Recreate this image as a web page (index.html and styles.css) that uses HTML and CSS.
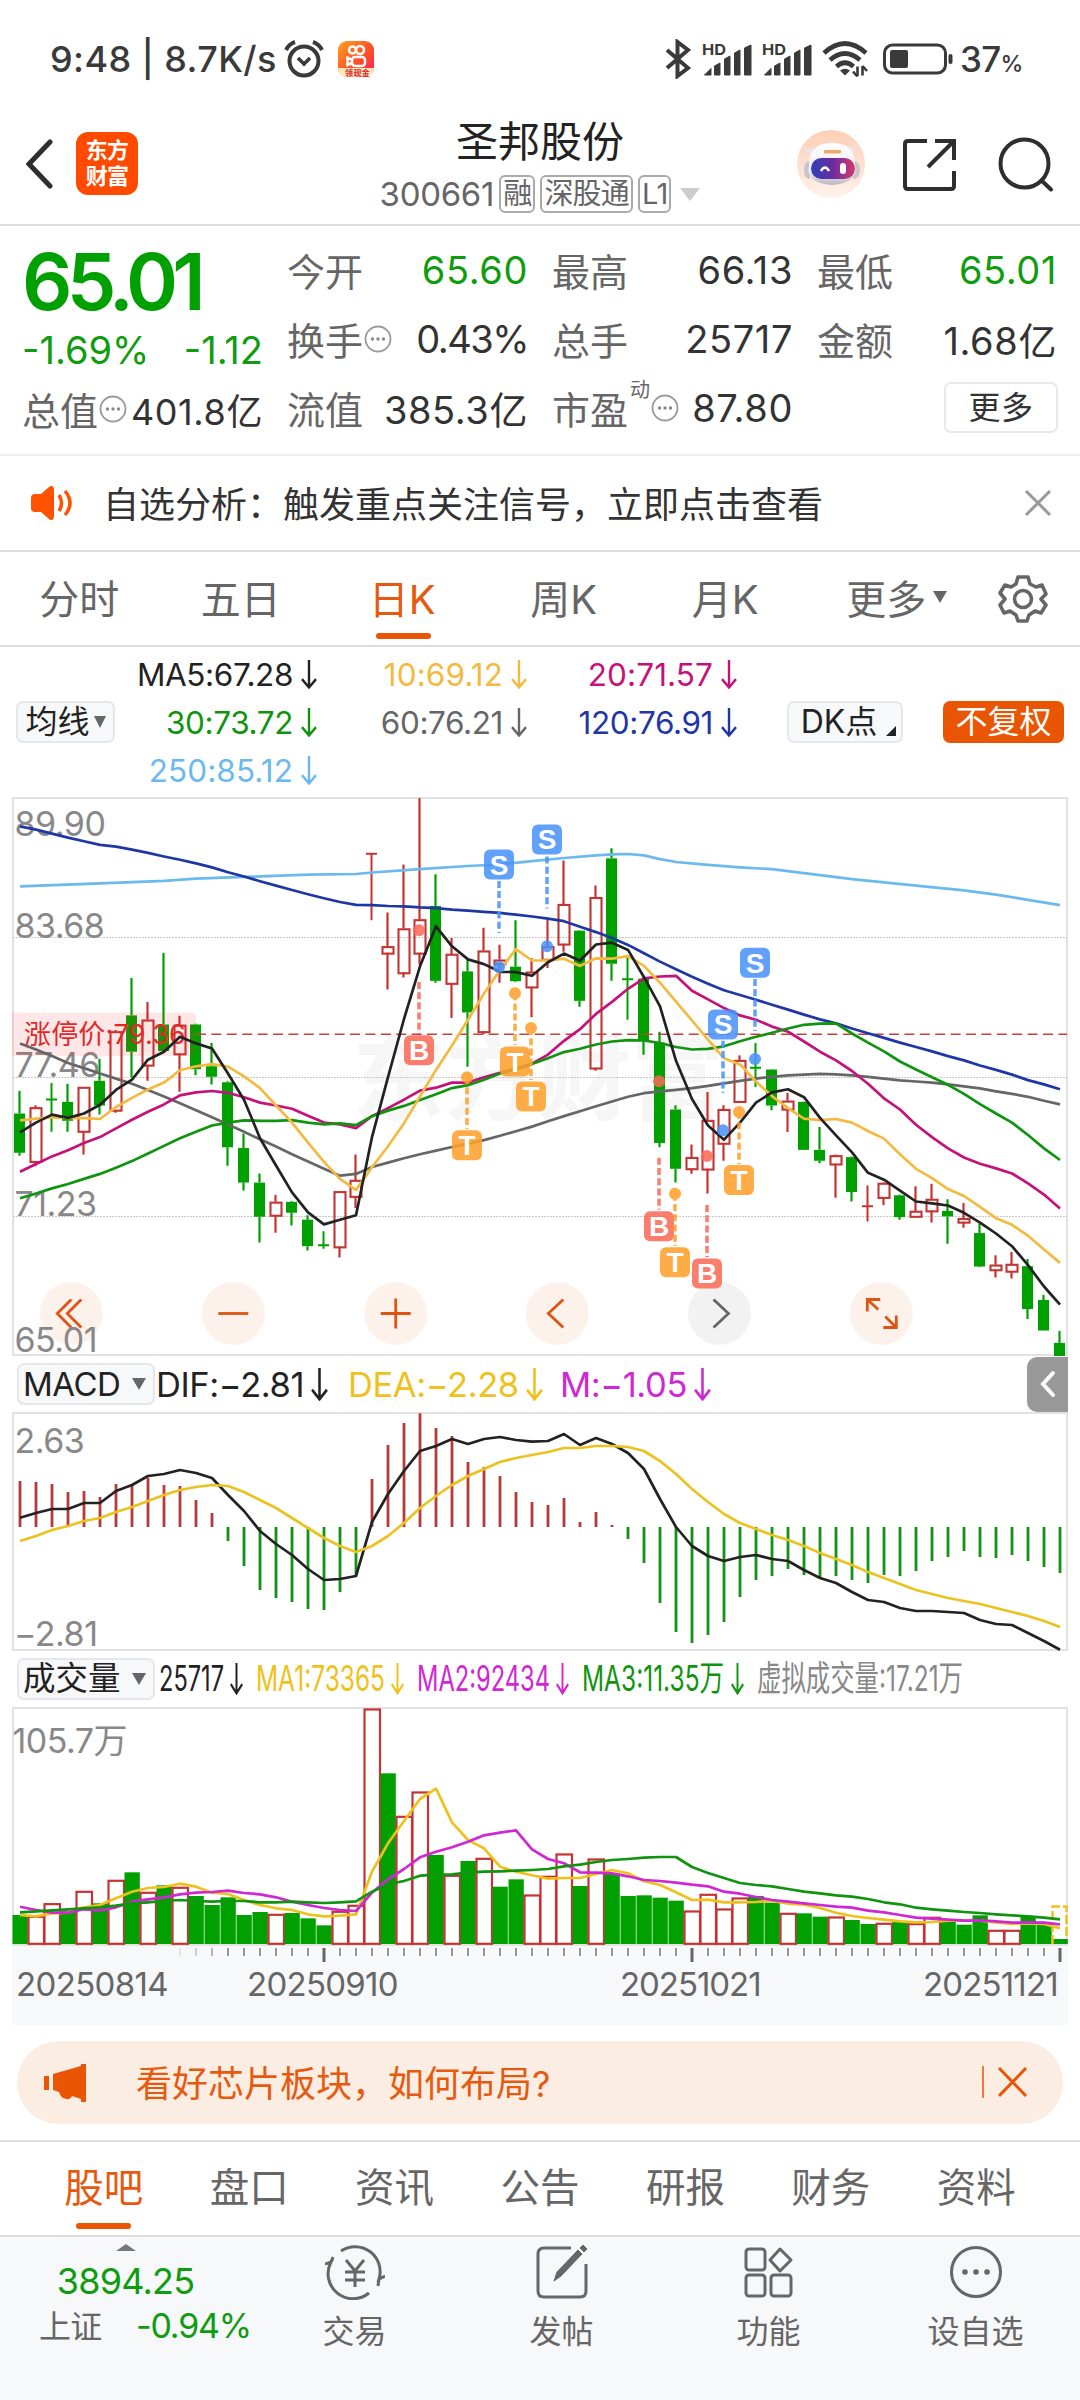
FILE: index.html
```html
<!DOCTYPE html>
<html lang="zh-CN">
  <head>
    <meta charset="UTF-8" />
    <meta name="viewport" content="width=device-width, initial-scale=1.0" />
    <title>圣邦股份 300661</title>
    <link rel="stylesheet" href="styles.css">
  </head>
  <body>
    <svg class="defs" width="0" height="0">
      <symbol id="down" viewBox="0 0 16 28" preserveAspectRatio="none"><path d="M8 0V26M1 18.500L8 26.500L15 18.500" fill="none" stroke="currentColor" stroke-width="2.400" /></symbol>
      <symbol id="bars" viewBox="0 0 50 36">
        <path d="M2.500 34L9 27.500V34ZM12.500 34V25L18 22V34ZM22.500 34V18L28 15V34ZM32.500 34V12L38 9V34ZM42.500 34V7L49 4V34Z" fill="#3a3a3a" stroke="#3a3a3a" stroke-linejoin="round" />
      </symbol>
      <symbol id="dots" viewBox="0 0 28 28">
        <circle cx="14" cy="14" r="12.500" fill="none" stroke="#999" stroke-width="1.800" />
        <circle cx="8.500" cy="14" r="1.700" fill="#888" /><circle cx="14" cy="14" r="1.700" fill="#888" /><circle cx="19.500" cy="14" r="1.700" fill="#888" />
      </symbol>
    </svg>

    <div class="status">
      <span class="clock">9:48 | 8.7K/s</span>
      <svg class="alarm" width="40" height="38" viewBox="0 0 40 38" fill="none" stroke="#3a3a3a" stroke-width="4">
        <circle cx="20" cy="21" r="14.500" /><path d="M2 10Q5 4 11 2M38 10Q35 4 29 2" /><path d="M14 18L20 24L26 18" stroke-width="3.500" />
      </svg>
      <svg class="promo" width="36" height="36" viewBox="0 0 36 36">
        <defs><linearGradient id="pg" x1="0" y1="0" x2="1" y2="1"><stop offset="0" stop-color="#ffa01e" /><stop offset=".6" stop-color="#ff4a28" /><stop offset="1" stop-color="#ff2060" /></linearGradient></defs>
        <rect width="36" height="36" rx="9" fill="url(#pg)" />
        <g fill="none" stroke="#fff" stroke-width="2.500"><circle cx="14.500" cy="9" r="3.500" /><circle cx="22" cy="9" r="4" /><rect x="14" y="16" width="13" height="9" rx="3" /><path d="M14 19L9.500 16.500V24L14 22" /></g>
        <path d="M0 27H36Q36 36 27 36H9Q0 36 0 27Z" fill="#ffe6c0" />
        <text x="7" y="34.500" font-size="8" font-weight="700" fill="#e02020" textLength="24">领现金</text>
      </svg>
      <svg class="bt" width="26" height="40" viewBox="0 0 26 40" fill="none" stroke="#3a3a3a" stroke-width="4"><path d="M2 11L23 29L12.500 37V3L23 11L2 29" /></svg>
      <svg class="sig" width="50" height="36"><use href="#bars" /><text x="0" y="14" textLength="24" lengthAdjust="spacingAndGlyphs">HD</text></svg>
      <svg class="sig" width="50" height="36"><use href="#bars" /><text x="0" y="14" textLength="24" lengthAdjust="spacingAndGlyphs">HD</text></svg>
      <svg class="wifi" width="46" height="36" viewBox="0 0 46 36" fill="none" stroke="#3a3a3a" stroke-width="4.600">
        <path d="M2 12Q23 -7 44 12M8 19Q23 6 38 19M14.500 25.500Q23 18 31.500 25.500" /><path d="M18 29.500Q23 26 28 29.500L23 34.500Z" fill="#3a3a3a" stroke="none" />
        <path d="M35.500 35V25.500M40.500 34.500V25" stroke-width="2.600" /><path d="M31 30.500L35.500 35.500M45 30L40.500 25" stroke-width="2.600" />
      </svg>
      <svg class="battery" width="70" height="32" viewBox="0 0 70 32"><rect x="1.500" y="2" width="61" height="28" rx="8" fill="none" stroke="#3a3a3a" stroke-width="3" /><rect x="7" y="7" width="18" height="18" rx="2" fill="#3a3a3a" /><rect x="65.500" y="11" width="4" height="10" rx="2" fill="#3a3a3a" /></svg>
      <span class="percent">37<small>%</small></span>
    </div>

    <header class="header">
      <div class="header-left">
        <svg width="28" height="52" viewBox="0 0 28 52" fill="none" stroke="#2e2e2e" stroke-width="5" stroke-linecap="round"><path d="M24 4L3 26L24 48" /></svg>
        <div class="logo">东方<br>财富</div>
      </div>
      <div class="title">
        <h1>圣邦股份</h1>
        <div class="code"><span class="number">300661</span><i>融</i><i>深股通</i><i>L1</i><b class="caret"></b></div>
      </div>
      <div class="header-right">
        <svg width="70" height="70" viewBox="0 0 70 70">
          <defs>
            <linearGradient id="halo" x1="0" y1="0" x2="0" y2="1"><stop offset="0" stop-color="#ffceb5" /><stop offset="1" stop-color="#fff2eb" /></linearGradient>
            <linearGradient id="visor" x1="0" y1="0" x2="1" y2="0"><stop offset="0" stop-color="#3140b8" /><stop offset=".5" stop-color="#6a2ca0" /><stop offset="1" stop-color="#d83a68" /></linearGradient>
            <linearGradient id="shell" x1="0" y1="0" x2="0" y2="1"><stop offset="0" stop-color="#fff" /><stop offset=".7" stop-color="#eeebee" /><stop offset="1" stop-color="#b9b5bd" /></linearGradient>
          </defs>
          <circle cx="35" cy="35" r="34" fill="url(#halo)" />
          <path d="M8 17Q9 24 16 26L21 19Q12 21 8 17ZM60 15Q61 23 54 26L47 18Q57 20 60 15Z" fill="#e9e4e8" />
          <path d="M8 41Q8 32 14 32V50Q8 50 8 41ZM64 41Q64 32 57 32V50Q64 50 64 41Z" fill="#c9c5cd" />
          <path d="M13 36Q13 14 36 14Q59 14 59 36Q63 54 36 56Q9 54 13 36Z" fill="url(#shell)" />
          <rect x="15" y="29" width="44" height="21" rx="10.500" fill="url(#visor)" />
          <path d="M25 42Q29 35 33 42" fill="none" stroke="#fff" stroke-width="2.500" /><rect x="44" y="34" width="6" height="11" rx="3" fill="#fff" />
          <rect x="28" y="21" width="17" height="3.500" rx="1" fill="#f0a868" />
        </svg>
        <svg width="56" height="56" viewBox="0 0 56 56" fill="none" stroke="#2e2e2e" stroke-width="4"><path d="M25 4H6Q3 4 3 7V49Q3 52 6 52H49Q52 52 52 49V34M33 4H52V23M51 5L26 30" /></svg>
        <svg width="56" height="56" viewBox="0 0 56 56" fill="none" stroke="#2e2e2e" stroke-width="4" stroke-linecap="round"><circle cx="26.500" cy="26.500" r="24" /><path d="M43.500 43.500L53 52.500" /></svg>
      </div>
    </header>

    <section class="quote">
      <div class="quote-main">
        <div class="price">65.01</div>
        <div class="row change"><span>-1.69%</span><span>-1.12</span></div>
        <div class="row"><label>总值<svg class="info"><use href="#dots" /></svg></label><span>401.8亿</span></div>
      </div>
      <div class="quote-col">
        <div class="row"><label>今开</label><span class="down">65.60</span></div>
        <div class="row"><label>换手<svg class="info"><use href="#dots" /></svg></label><span class="tight">0.43%</span></div>
        <div class="row"><label>流值</label><span>385.3亿</span></div>
      </div>
      <div class="quote-col">
        <div class="row"><label>最高</label><span>66.13</span></div>
        <div class="row"><label>总手</label><span>25717</span></div>
        <div class="row"><label>市盈<sup>动</sup><svg class="info"><use href="#dots" /></svg></label><span>87.80</span></div>
      </div>
      <div class="quote-col">
        <div class="row"><label>最低</label><span class="down">65.01</span></div>
        <div class="row"><label>金额</label><span>1.68亿</span></div>
        <div class="row"><button class="more">更多</button></div>
      </div>
    </section>

    <section class="notice">
      <svg width="42" height="34" viewBox="0 0 42 34"><path d="M0 12Q0 8 4 8H10L18 1Q22 -2 23 3V31Q22 36 18 33L10 26H4Q0 26 0 22Z" fill="#ff5200" /><path d="M28 9Q33 17 28 25M34 5Q44 17 34 29" fill="none" stroke="#ff5200" stroke-width="3.500" /></svg>
      <p>自选分析：触发重点关注信号，立即点击查看</p>
      <svg width="28" height="28" viewBox="0 0 28 28" stroke="#999" stroke-width="3"><path d="M2 2L26 26M26 2L2 26" /></svg>
    </section>

    <nav class="periods">
      <a>分时</a><a>五日</a><a class="active">日K</a><a>周K</a><a>月K</a><a>更多<b class="caret"></b></a>
      <svg width="50" height="50" viewBox="0 0 50 50" fill="none" stroke="#666" stroke-width="3.600" stroke-linejoin="round"><path d="M20 3H30L32 10L38 13L44 11L48 20L43 25L48 31L43 39L37 37L31 41L29 47H20L18 41L12 37L6 39L2 31L7 25L2 19L7 11L13 13L18 10Z" /><circle cx="25" cy="25" r="8.500" /></svg>
    </nav>

    <section class="averages">
      <button class="chip">均线<b class="caret"></b></button>
      <div class="ma-grid">
        <span class="c-black">MA5:67.28<svg><use href="#down" /></svg></span>
        <span class="c-yellow">10:69.12<svg><use href="#down" /></svg></span>
        <span class="c-pink">20:71.57<svg><use href="#down" /></svg></span>
        <span class="c-green">30:73.72<svg><use href="#down" /></svg></span>
        <span class="c-gray">60:76.21<svg><use href="#down" /></svg></span>
        <span class="c-blue">120:76.91<svg><use href="#down" /></svg></span>
        <span class="c-sky">250:85.12<svg><use href="#down" /></svg></span>
      </div>
      <button class="chip dk">DK点</button>
      <button class="chip fq">不复权</button>
    </section>

    <main class="charts">
      <svg id="priceChart" width="1056" height="559" viewBox="12 7 1056 559"></svg>

      <div class="legend macd">
        <button class="chip">MACD<b class="caret"></b></button>
        <span class="c-black">DIF:−2.81<svg><use href="#down" /></svg></span>
        <span class="c-gold">DEA:−2.28<svg><use href="#down" /></svg></span>
        <span class="c-violet">M:−1.05<svg><use href="#down" /></svg></span>
        <div class="drawer"><svg width="16" height="28" viewBox="0 0 16 28" fill="none" stroke="#fff" stroke-width="4" stroke-linecap="round"><path d="M13 3L3 14L13 25" /></svg></div>
      </div>
      <svg id="macdChart" width="1056" height="239" viewBox="12 62 1056 239"></svg>

      <div class="legend volume">
        <button class="chip">成交量<b class="caret"></b></button>
        <svg width="820" height="40" viewBox="157 0 820 40" class="volume-values">
          <g class="c-black"><text x="159" y="32" textLength="65" lengthAdjust="spacingAndGlyphs">25717</text><use href="#down" x="230" y="4" width="13" height="32" /></g>
          <g class="c-gold"><text x="256" y="32" textLength="129" lengthAdjust="spacingAndGlyphs">MA1:73365</text><use href="#down" x="391" y="4" width="13" height="32" /></g>
          <g class="c-violet"><text x="417" y="32" textLength="133" lengthAdjust="spacingAndGlyphs">MA2:92434</text><use href="#down" x="556" y="4" width="13" height="32" /></g>
          <g class="c-green"><text x="582" y="32" textLength="142" lengthAdjust="spacingAndGlyphs">MA3:11.35万</text><use href="#down" x="731" y="4" width="13" height="32" /></g>
          <g class="c-light"><text x="757" y="32" textLength="206" lengthAdjust="spacingAndGlyphs">虚拟成交量:17.21万</text></g>
        </svg>
      </div>
      <svg id="volumeChart" width="1056" height="239" viewBox="12 57 1056 239"></svg>
      <svg id="dateAxis" width="1056" height="79" viewBox="12 0 1056 79"></svg>
    </main>

    <section class="banner">
      <svg width="42" height="38" viewBox="0 0 42 38" fill="#ea5504"><path d="M0 12H5V26H0ZM9 10L37 2V0H42V38H37V35L28 32Q26 37 19 34Q16 32 15 28L9 26Z" /></svg>
      <p>看好芯片板块，如何布局?</p>
      <svg class="close" width="46" height="34" viewBox="0 0 46 34" fill="none" stroke="#ea5504"><path d="M1 1V33" stroke-width="1.500" /><path d="M17 3L44 31M44 3L17 31" stroke-width="3" /></svg>
    </section>

    <nav class="sections">
      <a class="active">股吧</a><a>盘口</a><a>资讯</a><a>公告</a><a>研报</a><a>财务</a><a>资料</a>
    </nav>

    <footer class="toolbar">
      <div class="index">
        <b class="caret"></b>
        <div class="index-value">3894.25</div>
        <div class="index-row"><span>上证</span><em>-0.94%</em></div>
      </div>
      <a><svg width="60" height="56" viewBox="0 0 60 56" fill="none" stroke="#666" stroke-width="3"><path d="M16 7A25 25 0 0 1 54 35L60 32M54 35L53 42M44 49A25 25 0 0 1 6 18L0 20M6 18L8 13M21 16L30 27L39 16M30 27V43M20 28H40M20 36H40" /></svg>交易</a>
      <a><svg width="54" height="56" viewBox="0 0 54 56" fill="none" stroke="#666" stroke-width="3"><path d="M36 4H9Q3 4 3 10V47Q3 53 9 53H45Q51 53 51 47V20" /><path d="M19 37L22 28L43 6L47 10L26 32ZM45 4L48 1L52 5L49 8Z" fill="#666" stroke-width="1" /></svg>发帖</a>
      <a><svg width="54" height="56" viewBox="0 0 54 56" fill="none" stroke="#666" stroke-width="3"><rect x="4" y="5" width="19" height="21" rx="3" /><rect x="4" y="31" width="19" height="21" rx="3" /><rect x="29" y="31" width="20" height="21" rx="3" /><path d="M38 5L49 16L38 27L28 16Z" stroke-linejoin="round" /></svg>功能</a>
      <a><svg width="54" height="56" viewBox="0 0 54 56" fill="none" stroke="#666" stroke-width="3"><circle cx="27" cy="28" r="24.500" /><g fill="#666" stroke="none"><circle cx="16" cy="28" r="2.800" /><circle cx="27" cy="28" r="2.800" /><circle cx="38" cy="28" r="2.800" /></g></svg>设自选</a>
    </footer>

    <script src="script.js"></script>
  </body>
</html>
```

FILE: styles.css
```css
* {
  box-sizing: border-box;
}
body {
  margin: 0;
  width: 1080px;
  height: 2400px;
  overflow: hidden;
  background-color: #ffffff;
  color: #333333;
  font-family: Inter, 'Noto Sans CJK SC', sans-serif;
  font-size: 38px;
  letter-spacing: -0.02em;
}
.defs {
  position: absolute;
}
svg {
  display: block;
  flex: none;
}
p,
h1 {
  margin: 0;
  font-weight: 400;
}
button {
  font-family: inherit;
  letter-spacing: inherit;
  padding: 0;
}
.caret {
  display: inline-block;
  border: 7px solid transparent;
  border-top: 12px solid #666666;
  border-bottom: 0;
}
.c-black { color: #222222; }
.c-yellow { color: #f4b93f; }
.c-pink { color: #c4127a; }
.c-green { color: #109410; }
.c-gray { color: #666666; }
.c-blue { color: #1f36a5; }
.c-sky { color: #6bb9ee; }
.c-gold { color: #efc11b; }
.c-violet { color: #cf27d3; }
.c-light { color: #888888; }

/* status bar */
.status {
  display: flex;
  align-items: center;
  height: 118px;
  padding: 0 56px 0 50px;
  color: #3a3a3a;
  font-weight: 500;
  font-size: 36px;
}
.clock {
  width: 234px;
  letter-spacing: 0.4px;
  white-space: nowrap;
}
.promo {
  margin: 0 auto 0 14px;
}
.bt {
  margin-right: 11px;
}
.sig {
  margin-right: 10px;
}
.sig text {
  fill: #3a3a3a;
  font-size: 15px;
  font-weight: 700;
  letter-spacing: 0;
}
.wifi {
  margin-right: 15px;
}
.battery {
  margin-right: 7px;
}
.percent {
  width: 64px;
  font-size: 35px;
  white-space: nowrap;
}
.percent small {
  font-size: 23px;
}

/* title bar */
.header {
  display: grid;
  grid-template-columns: 1fr 300px 1fr;
  height: 108px;
  border-bottom: 2px solid #dddddd;
}
.header-left {
  display: flex;
  align-items: center;
  gap: 22px;
  padding: 0 0 17px 26px;
  height: 108px;
}
.logo {
  width: 62px;
  height: 63px;
  padding-top: 5px;
  border-radius: 12px;
  background-color: #ff4a00;
  color: #ffffff;
  font-size: 22px;
  font-weight: 700;
  line-height: 26px;
  text-align: center;
}
.title {
  display: flex;
  flex-direction: column;
  align-items: center;
}
h1 {
  color: #222222;
  font-size: 42px;
  line-height: 48px;
  letter-spacing: 0;
}
.code {
  display: flex;
  align-items: center;
  gap: 5px;
  margin-top: 8px;
  height: 40px;
  color: #666666;
  font-size: 33px;
  white-space: nowrap;
}
.code .number {
  letter-spacing: -0.3px;
}
.code i {
  height: 38px;
  padding: 0 2px;
  border: 2px solid #aaaaaa;
  border-radius: 6px;
  font-size: 29px;
  font-style: normal;
  line-height: 33px;
}
.code .caret {
  margin-left: 4px;
  border-width: 13px 10px 0;
  border-top-color: #cccccc;
}
.header-right {
  display: flex;
  align-items: center;
  justify-content: flex-end;
  gap: 36px;
  padding: 0 26px 15px 0;
}
.header-right svg:first-child {
  margin-bottom: 2px;
}
.header-right svg:last-child {
  margin-left: 4px;
}

/* quote numbers */
.quote {
  display: grid;
  grid-template-columns: 241px 241px 241px 240px;
  gap: 24px;
  height: 230px;
  padding: 9px 23px 0 22px;
  border-bottom: 2px solid #eeeeee;
}
.price {
  height: 91px;
  color: #00a000;
  font-size: 79px;
  font-weight: 600;
  line-height: 92px;
  letter-spacing: -5.800px;
}
.row {
  display: flex;
  align-items: center;
  justify-content: space-between;
  height: 69px;
  letter-spacing: 0.6px;
  white-space: nowrap;
}
.row label {
  display: flex;
  align-items: center;
  color: #666666;
  letter-spacing: 0;
}
.row.change {
  height: 48px;
  color: #109c10;
  letter-spacing: 0;
}
.row .tight {
  letter-spacing: -1.500px;
}
.quote-main .row:last-child span {
  font-size: 36px;
}
.row .down {
  color: #109c10;
}
.info {
  width: 28px;
  height: 28px;
  margin-left: 1px;
}
.row sup {
  font-size: 20px;
  align-self: flex-start;
  margin-top: -6px;
  margin-left: 2px;
}
.row sup + .info {
  margin-left: 1px;
}
.more {
  width: 114px;
  height: 51px;
  margin-left: auto;
  margin-right: -1px;
  border: 2px solid #e8e8e8;
  border-radius: 7px;
  background-color: #ffffff;
  color: #333333;
  font-size: 32px;
  line-height: 44px;
}

/* notice line */
.notice {
  display: flex;
  align-items: center;
  height: 96px;
  padding: 0 28px 0 31px;
  border-bottom: 2px solid #dddddd;
}
.notice p {
  flex: 1;
  padding: 0 0 3px 30px;
  font-size: 36px;
  letter-spacing: 0;
}

/* period tabs */
.periods {
  display: flex;
  align-items: center;
  height: 95px;
  border-bottom: 2px solid #dddddd;
  color: #666666;
  font-size: 40px;
  letter-spacing: 0;
}
.periods a {
  position: relative;
  display: flex;
  align-items: center;
  justify-content: center;
  width: 161.500px;
  height: 93px;
  padding: 0 3px 3px 0;
}
.periods a .caret {
  margin: 0 -20px 0 7px;
}
.periods svg {
  margin-left: 29px;
}
.periods .active,
.sections .active {
  color: #e65a10;
}
.active::after {
  content: '';
  position: absolute;
  left: calc(50% - 28px);
  bottom: 6px;
  width: 55px;
  height: 6px;
  border-radius: 3px;
  background-color: #ea5504;
}

/* moving averages */
.averages {
  display: flex;
  align-items: center;
  height: 150px;
  padding-left: 16px;
}
.chip {
  display: flex;
  align-items: center;
  justify-content: center;
  height: 42px;
  border: 2px solid #e6e7ea;
  border-radius: 7px;
  background-color: #f7f8fa;
  color: #222222;
  font-size: 32px;
  line-height: 36px;
  letter-spacing: 0;
  white-space: nowrap;
}
.averages .chip:first-child {
  width: 99px;
  gap: 4px;
}
.averages .chip .caret {
  border-left-width: 6px;
  border-right-width: 6px;
}
.ma-grid {
  display: grid;
  grid-template-columns: 202px 210px 210px;
  grid-auto-rows: 48px;
  width: 672px;
  font-size: 31.500px;
  letter-spacing: -0.400px;
}
.ma-grid span {
  display: flex;
  align-items: center;
  justify-content: flex-end;
  gap: 8px;
}
.ma-grid svg {
  width: 16px;
  height: 29px;
}
.ma-grid .c-yellow,
.ma-grid .c-pink,
.ma-grid .c-sky {
  letter-spacing: 0.1px;
}
.averages .dk {
  position: relative;
  width: 116px;
  padding-right: 12px;
}
.dk::after {
  content: '';
  position: absolute;
  right: 5px;
  bottom: 5px;
  border-left: 10px solid transparent;
  border-bottom: 10px solid #222222;
}
.averages .fq {
  width: 121px;
  margin-left: 40px;
  border: none;
  background-color: #ea5504;
  color: #ffffff;
}

/* charts */
.charts {
  width: 1056px;
  margin-left: 12px;
}
.charts > svg {
  overflow: visible;
}
.legend {
  display: flex;
  align-items: center;
  height: 56px;
  padding-left: 5px;
}
.legend .chip {
  width: 138px;
  justify-content: space-between;
  padding: 0 7px 0 4px;
  font-size: 32.500px;
}
.legend.macd {
  font-size: 34.500px;
  letter-spacing: -0.400px;
}
.legend.macd .chip {
  font-size: 33px;
  letter-spacing: -0.5px;
}
.legend span {
  display: flex;
  align-items: center;
  gap: 7px;
  margin-left: 1px;
  width: 191px;
  white-space: nowrap;
}
.legend span.c-gold {
  width: 211px;
}
.legend span svg {
  width: 17px;
  height: 33px;
}
.drawer {
  display: flex;
  align-items: center;
  justify-content: center;
  width: 41px;
  height: 55px;
  margin-left: auto;
  border-radius: 10px 0 0 10px;
  background-color: #999999;
}
.volume-values {
  margin-left: 2px;
  font-size: 35px;
  letter-spacing: 0;
}
.volume-values text {
  fill: currentColor;
}
#dateAxis {
  background-color: #f7f8fa;
}
.axis-text {
  fill: #888888;
  font-size: 34px;
  letter-spacing: -0.500px;
}
.date-text {
  fill: #666666;
  font-size: 33px;
  letter-spacing: -0.600px;
}
.watermark {
  fill: #f6f6f6;
  font-size: 94px;
  font-weight: 700;
  letter-spacing: 0;
}
.limit-text {
  fill: #e02a2a;
  font-size: 27px;
}
.mark-text {
  fill: #ffffff;
  font-family: 'Liberation Sans', sans-serif;
  font-size: 28px;
  font-weight: 700;
  letter-spacing: 0;
}

/* banner */
.banner {
  display: flex;
  align-items: center;
  width: 1046px;
  height: 83px;
  margin: 16px 0 0 17px;
  padding: 0 35px 0 27px;
  border-radius: 42px;
  background-color: #fcede3;
  color: #e65a10;
}
.banner p {
  padding: 0 0 3px 50px;
  font-size: 36px;
  letter-spacing: 0;
}
.banner .close {
  margin: 0 0 2px auto;
}

/* bottom tabs */
.sections {
  display: flex;
  height: 97px;
  margin-top: 16px;
  padding: 0 31px;
  border-top: 2px solid #dddddd;
  border-bottom: 2px solid #dddddd;
  color: #666666;
  font-size: 39.500px;
  letter-spacing: 0;
}
.sections a {
  position: relative;
  flex: 1;
  line-height: 92px;
  text-align: center;
}

/* toolbar */
.toolbar {
  display: flex;
  height: 163px;
  background-color: #f7f8fa;
  color: #666666;
  font-size: 32px;
}
.index {
  width: 251px;
  padding-top: 7px;
  text-align: center;
}
.index .caret {
  display: block;
  width: 0;
  margin: 0 auto;
  border-width: 0 10px 7px;
  border-bottom: 7px solid #77777c;
}
.index-value {
  margin-top: 8px;
  color: #109c10;
  font-size: 36px;
  line-height: 44px;
  letter-spacing: -0.800px;
}
.index-row {
  display: flex;
  align-items: center;
  justify-content: space-between;
  height: 44px;
  padding-left: 39px;
}
.index-row span {
  padding-bottom: 3px;
}
.index-row em {
  color: #109c10;
  font-size: 34px;
  font-style: normal;
  letter-spacing: -1.200px;
}
.toolbar a {
  display: flex;
  flex-direction: column;
  align-items: center;
  width: 207px;
  padding-top: 7px;
  line-height: 46px;
  letter-spacing: 0;
}
.toolbar a svg {
  margin-bottom: 9px;
}
```

FILE: script.js
```js
const GREEN = '#00a000'
const RED = '#c43432'

// x of the i-th trading day
const X = (i) => 20 + 16 * i
const every = (list) => list.map((v, i) => [i, v])

function line(points, k, color, width = 2.7) {
  const pts = points.map(([i, v]) => X(i) + ',' + (v / k).toFixed(1)).join(' ')
  return `<polyline points="${pts}" fill="none" stroke="${color}" stroke-width="${width}" stroke-linejoin="round"/>`
}

function frame(y, h) {
  return `<rect x="13" y="${y}" width="1054" height="${h}" fill="none" stroke="#e2e2e2" stroke-width="2"/>`
}

// ---- price chart: [color, high, body top, body bottom, low]
const K = 2.751
const candles = [
  ['g', 828, 890, 998, 1006], ['r', 867, 873, 1021, 1035], ['g', 806, 850, 852, 940], ['g', 808, 858, 910, 940],
  ['r', 817, 817, 938, 1003], ['g', 740, 800, 868, 893], ['r', 660, 664, 880, 888], ['g', 517, 620, 720, 790],
  ['r', 583, 632, 756, 800], ['g', 448, 645, 718, 718], ['r', 621, 646, 725, 830], ['g', 643, 645, 768, 785],
  ['g', 696, 760, 789, 810], ['g', 801, 804, 983, 1034], ['g', 945, 985, 1080, 1102], ['g', 1055, 1080, 1174, 1245],
  ['r', 1114, 1133, 1169, 1218], ['g', 1131, 1133, 1163, 1198], ['g', 1170, 1182, 1255, 1267], ['g', 1214, 1251, 1254, 1262],
  ['r', 1103, 1104, 1256, 1286], ['r', 1003, 1073, 1117, 1150], ['r', 174, 174, 176, 358], ['r', 337, 430, 448, 549],
  ['r', 205, 381, 502, 516], ['r', 22, 356, 448, 480], ['g', 232, 319, 525, 530], ['r', 407, 451, 531, 627],
  ['g', 468, 499, 612, 761], ['r', 379, 442, 664, 672], ['r', 426, 467, 477, 530], ['g', 358, 486, 526, 528],
  ['r', 462, 500, 541, 625], ['r', 355, 430, 465, 490], ['r', 194, 314, 423, 445], ['g', 386, 387, 580, 596],
  ['r', 263, 295, 764, 772], ['g', 160, 188, 478, 525], ['g', 460, 519, 524, 632], ['g', 515, 519, 688, 728],
  ['g', 665, 695, 971, 983], ['g', 867, 879, 1042, 1080], ['r', 975, 1010, 1041, 1056], ['r', 831, 908, 1042, 1110],
  ['r', 867, 878, 971, 1020], ['r', 730, 743, 856, 856], ['g', 696, 763, 766, 817], ['g', 768, 769, 868, 881],
  ['r', 833, 855, 877, 941], ['g', 857, 858, 990, 990], ['g', 927, 990, 1020, 1027], ['r', 1003, 1005, 1028, 1122],
  ['g', 1008, 1010, 1106, 1132], ['r', 1088, 1144, 1147, 1187], ['r', 1080, 1081, 1120, 1142], ['g', 1113, 1115, 1175, 1182],
  ['r', 1090, 1158, 1172, 1174], ['r', 1083, 1125, 1157, 1190], ['g', 1126, 1158, 1173, 1248], ['r', 1136, 1178, 1188, 1204],
  ['g', 1193, 1219, 1311, 1313], ['r', 1280, 1306, 1319, 1341], ['r', 1271, 1304, 1323, 1344], ['g', 1290, 1310, 1428, 1455],
  ['g', 1389, 1403, 1487, 1487], ['g', 1488, 1521, 1557, 1557],
]
const ma5 = [942, 915, 893, 902, 890, 866, 825, 797, 742, 720, 679, 697, 711, 780, 852, 958, 1033, 1107, 1162, 1195, 1182, 1170, 955, 790, 630, 485, 375, 430, 466, 479, 500, 501, 511, 474, 450, 470, 425, 420, 440, 515, 595, 745, 850, 923, 962, 915, 860, 832, 823, 845, 902, 950, 997, 1053, 1072, 1102, 1132, 1137, 1143, 1163, 1190, 1220, 1255, 1307, 1366, 1416]
const ma10 = [909, 904, 901, 902, 903, 905, 872, 847, 824, 805, 771, 760, 754, 761, 788, 820, 868, 915, 970, 1023, 1070, 1100, 1038, 980, 917, 843, 770, 703, 632, 560, 495, 438, 469, 469, 464, 484, 463, 464, 457, 484, 530, 582, 634, 687, 738, 755, 802, 842, 875, 904, 908, 905, 915, 938, 959, 1002, 1042, 1068, 1098, 1117, 1147, 1178, 1196, 1226, 1264, 1301]
const ma20 = [1050, 1029, 1008, 991, 971, 955, 931, 907, 885, 865, 840, 832, 828, 833, 845, 860, 868, 877, 896, 915, 920, 930, 897, 875, 852, 827, 819, 805, 805, 790, 778, 766, 753, 728, 690, 658, 616, 583, 547, 518, 513, 511, 552, 576, 600, 620, 632, 651, 665, 692, 720, 744, 773, 808, 848, 879, 921, 955, 986, 1011, 1028, 1041, 1055, 1082, 1113, 1151]
const ma30 = [1123, 1110, 1096, 1084, 1070, 1056, 1039, 1021, 1000, 979, 958, 940, 923, 915, 909, 910, 910, 908, 915, 920, 917, 922, 897, 882, 869, 853, 837, 820, 812, 797, 780, 768, 754, 738, 721, 712, 700, 692, 688, 689, 696, 707, 714, 712, 705, 691, 679, 668, 656, 646, 643, 642, 670, 695, 719, 747, 769, 790, 811, 836, 864, 890, 915, 949, 986, 1018]
const ma60 = [697, 714, 732, 751, 765, 780, 794, 808, 825, 843, 862, 881, 900, 920, 940, 961, 981, 1002, 1022, 1042, 1061, 1056, 1037, 1025, 1013, 1002, 992, 982, 973, 963, 951, 939, 926, 911, 897, 884, 870, 857, 844, 834, 829, 825, 820, 814, 807, 800, 794, 789, 785, 783, 781, 782, 785, 789, 794, 799, 802, 805, 810, 815, 821, 829, 836, 844, 855, 865]
const ma120 = [100, 109, 120, 131, 141, 151, 156, 164, 173, 183, 192, 202, 213, 226, 238, 251, 263, 275, 287, 298, 308, 316, 317, 319, 320, 323, 325, 329, 332, 335, 338, 343, 348, 354, 361, 376, 391, 407, 426, 449, 472, 493, 514, 533, 551, 564, 577, 591, 604, 618, 631, 642, 656, 669, 682, 695, 707, 719, 732, 744, 758, 770, 783, 798, 810, 823]
const ma250 = [[0, 265], [5, 257], [9, 250], [11, 244], [14, 239], [18, 233], [21, 231], [22, 227], [25, 218], [28, 209], [30, 205], [32, 196], [34, 187], [36, 180], [37, 177], [38, 176], [39, 180], [40, 190], [41, 198], [43, 206], [45, 213], [47, 218], [48, 223], [50, 234], [52, 245], [54, 254], [56, 263], [59, 276], [61, 288], [63, 302], [65, 317]]

// buy / sell / T marks: [letter, day, label y, dot y, dash start y]
const marks = [
  ['S', 30, 205, 487, 250], ['S', 33, 136, 430, 183], ['S', 44, 645, 936, 690], ['S', 46, 475, 740, 520],
  ['B', 25, 716, 386, 528], ['B', 40, 1200, 801, 1012], ['B', 43, 1330, 1007, 1142],
  ['T', 28, 977, 790, 790], ['T', 31, 747, 559, 559], ['T', 32, 843, 655, 655], ['T', 41, 1299, 1111, 1111], ['T', 45, 1073, 886, 886],
]
const markColors = { S: '#4a92fb', B: '#fa6a58', T: '#ffa02c' }

function candle([c, high, top, bottom, low], i) {
  const x = X(i) - 0.5
  const y = (v) => v / K
  const color = c === 'g' ? GREEN : RED
  const h = Math.max((bottom - top) / K, 1)
  if (h < 2) {
    return `<path d="M${x} ${y(high)}V${y(low)}M${x - 5.5} ${y(top) + 0.5}h11" stroke="${color}" stroke-width="2"/>`
  }
  const body = c === 'g'
    ? `<rect x="${x - 5.5}" y="${y(top)}" width="11" height="${h}" fill="${color}"/>`
    : `<rect x="${x - 5}" y="${y(top) + 0.8}" width="11" height="${h}" fill="none" stroke="${color}" stroke-width="2.1"/>`
  return `<path d="M${x} ${y(high)}V${y(top)}M${x} ${y(bottom)}V${y(low)}" stroke="${color}" stroke-width="2.2"/>` + body
}

function mark([letter, i, label, dot, dash]) {
  const x = X(i) - 1
  const color = markColors[letter]
  return `<g opacity="0.87"><path d="M${x} ${dash / K}v52" stroke="${color}" stroke-width="3.5" stroke-dasharray="7 3.200"/>
    <circle cx="${x}" cy="${dot / K}" r="6" fill="${color}"/>
    <rect x="${x - 15}" y="${label / K - 15}" width="30" height="30" rx="6" fill="${color}"/></g>
    <text class="mark-text" x="${x}" y="${label / K + 10}" text-anchor="middle">${letter}</text>`
}

function roundButton(x, path, gray) {
  const fill = gray ? '#000' : '#ea5504'
  const stroke = gray ? '#666' : '#dd5513'
  return `<g transform="translate(${x} 523.500)"><circle r="31.500" fill="${fill}" opacity="${gray ? 0.05 : 0.08}"/>
    <path d="${path}" fill="none" stroke="${stroke}" stroke-width="2.800"/></g>`
}

document.getElementById('priceChart').innerHTML =
  `<text class="watermark" x="352" y="323" textLength="372" lengthAdjust="spacingAndGlyphs">东方财富</text>` +
  frame(8, 557) +
  [147.5, 287.5, 426.5].map((y) => `<path d="M13 ${y}H1067" stroke="#c8c8c8" stroke-dasharray="2 1"/>`).join('') +
  roundButton(71.3, 'M0 -14L-14 0L0 14M10 -14L-4 0L10 14') +
  roundButton(233.3, 'M-15 0H15') +
  roundButton(395.7, 'M-15 0H15M0 -15V15') +
  roundButton(557.3, 'M6 -14L-9 0L6 14') +
  roundButton(719.5, 'M-6 -14L9 0L-6 14', true) +
  roundButton(881.3, 'M-14 -2V-14H-1M-14 -14L-3 -4M15 2V14H2M15 14L4 3') +
  candles.map(candle).join('') +
  `<path d="M196 244.300H1067" stroke="#c8403c" stroke-width="1.500" stroke-dasharray="10 5.400"/>` +
  [['89.90', 46], ['83.68', 147.5], ['77.46', 286.5], ['71.23', 426], ['65.01', 561.5]]
    .map(([t, y]) => `<text class="axis-text" x="14.500" y="${y}">${t}</text>`).join('') +
  `<path d="M12 222.500H191Q196 222.500 196 228V261Q196 266 191 266H12Z" fill="#ff2020" opacity="0.11"/>` +
  `<text class="limit-text" x="24" y="254" textLength="161">涨停价:79.36</text>` +
  line(ma250, K, '#6bb9ee') +
  line(every(ma120), K, '#1f36a5') +
  line(every(ma60), K, '#666666') +
  line(every(ma20), K, '#c4127a') +
  line(every(ma30), K, '#109410') +
  line(every(ma10), K, '#f4b93f') +
  line(every(ma5), K, '#222222') +
  marks.map(mark).join('')

// ---- MACD
const bars = [393, 396, 402, 426, 423, 441, 402, 402, 384, 405, 408, 450, 489, 573, 648, 720, 744, 756, 777, 780, 726, 675, 387, 285, 219, 190, 234, 258, 336, 351, 378, 426, 456, 465, 444, 516, 486, 525, 567, 639, 759, 846, 879, 855, 816, 741, 690, 678, 657, 675, 684, 678, 690, 699, 675, 678, 663, 633, 621, 603, 621, 624, 615, 633, 651, 669]
const dif = [503, 489, 477, 477, 459, 459, 423, 405, 378, 372, 360, 369, 384, 435, 483, 543, 582, 615, 657, 690, 687, 678, 516, 432, 363, 303, 288, 267, 282, 267, 261, 270, 275, 273, 252, 285, 264, 282, 309, 357, 447, 531, 588, 618, 633, 621, 615, 627, 633, 660, 684, 699, 726, 750, 756, 774, 783, 783, 786, 789, 810, 822, 825, 849, 873, 899]
const dea = [573, 558, 540, 528, 513, 504, 486, 471, 453, 435, 420, 411, 405, 408, 426, 450, 474, 504, 534, 564, 588, 606, 588, 558, 519, 474, 438, 405, 378, 357, 336, 324, 315, 306, 294, 294, 288, 288, 291, 303, 333, 372, 417, 456, 492, 519, 537, 555, 570, 588, 609, 627, 645, 666, 684, 702, 720, 732, 744, 753, 762, 774, 786, 798, 813, 831]

document.getElementById('macdChart').innerHTML =
  frame(63, 237) +
  `<text class="axis-text" x="14.500" y="103">2.63</text><text class="axis-text" x="14" y="296">−2.81</text>` +
  bars.map((v, i) => `<path d="M${X(i)} 177V${v / 3}" stroke="${v < 531 ? '#b83a38' : '#159215'}" stroke-width="2.800"/>`).join('') +
  line(every(dif), 3, '#222222') +
  line(every(dea), 3, '#ebc21f')

// ---- volume
const volumes = [795, 798, 760, 783, 723, 760, 690, 667, 726, 706, 711, 738, 765, 742, 795, 786, 792, 789, 805, 826, 783, 765, 176, 370, 498, 425, 615, 675, 633, 624, 710, 688, 734, 678, 611, 708, 626, 670, 738, 736, 743, 752, 782, 732, 776, 743, 738, 758, 789, 790, 800, 800, 810, 822, 819, 816, 820, 801, 816, 824, 796, 840, 840, 798, 822, 867]
const rising = 'grrgrgrgrgrgggggrgggrrrgrrgrgrggrrrgrgggggrrrrggrggrggrgrrgggrrggg'
const vol1 = [795, 799, 790, 788, 772, 765, 745, 725, 714, 711, 701, 710, 728, 732, 750, 765, 775, 780, 793, 799, 797, 793, 665, 580, 513, 447, 416, 517, 570, 595, 650, 665, 676, 686, 684, 684, 672, 660, 670, 694, 705, 727, 750, 749, 757, 757, 756, 752, 761, 764, 774, 788, 798, 804, 809, 814, 817, 816, 812, 812, 812, 817, 822, 820, 822, 835]
const vol2 = [770, 780, 788, 788, 778, 781, 772, 755, 748, 742, 733, 728, 726, 722, 729, 733, 742, 755, 765, 774, 780, 783, 728, 688, 657, 622, 605, 592, 575, 556, 548, 541, 598, 627, 640, 667, 668, 670, 679, 690, 693, 698, 704, 709, 725, 731, 741, 750, 755, 760, 765, 770, 773, 782, 787, 795, 803, 806, 809, 812, 811, 814, 818, 817, 818, 823]
const vol3 = [787, 784, 781, 778, 775, 772, 767, 760, 757, 753, 750, 753, 755, 753, 753, 757, 757, 755, 757, 759, 757, 754, 725, 703, 693, 677, 674, 673, 668, 665, 664, 662, 660, 657, 649, 644, 636, 630, 627, 623, 621, 621, 651, 669, 684, 699, 705, 709, 717, 725, 730, 736, 740, 747, 757, 763, 773, 778, 782, 786, 789, 793, 796, 799, 803, 808]

document.getElementById('volumeChart').innerHTML =
  frame(58, 237) +
  `<text class="axis-text" x="12.500" y="103">105.7万</text>` +
  volumes.map((v, i) => {
    const x = X(i) - 8
    const y = v / 3
    return rising[i] === 'g'
      ? `<rect x="${x + 0.5}" y="${y}" width="15.300" height="${294 - y}" fill="${GREEN}"/>`
      : `<rect x="${x + 0.5}" y="${y + 0.8}" width="15.500" height="${293 - y}" fill="#fff" stroke="${RED}" stroke-width="2.2"/>`
  }).join('') +
  `<path d="M1052.500 294V256.500H1066.500V288" fill="none" stroke="#efc11b" stroke-width="2.500" stroke-dasharray="9 3"/>` +
  line(every(vol1), 3, '#efc11b') +
  line(every(vol2), 3, '#cf27d3') +
  line(every(vol3), 3, '#109410')

// ---- date axis, the first ticks fade in
let axis = ''
for (let i = 10; i <= 65; i++) {
  const major = i === 19 || i === 42 || i === 65
  const opacity = i < 13 ? 0.2 + (i - 10) * 0.25 : 1
  axis += `<path d="M${X(i)} 2V${major ? 16 : 10}" stroke="${major ? '#666' : '#999'}" stroke-width="${major ? 3 : 2}" opacity="${opacity}"/>`
}
const dates = [['20250814', 16, 152], ['20250910', 247, 151], ['20251021', 620, 141], ['20251121', 923, 135]]
axis += dates.map(([t, x, w]) => `<text class="date-text" x="${x}" y="50" textLength="${w}">${t}</text>`).join('')
document.getElementById('dateAxis').innerHTML = axis
```
